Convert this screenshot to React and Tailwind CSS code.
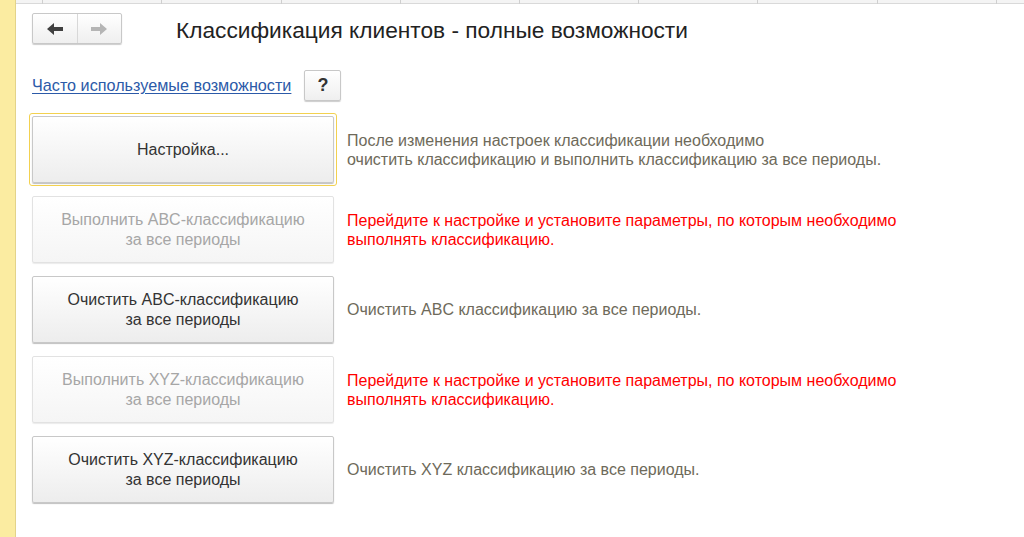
import React from 'react';

const actions = [
  {
    label: ['Настройка...'],
    note: ['После изменения настроек классификации необходимо', 'очистить классификацию и выполнить классификацию за все периоды.'],
    focused: true,
  },
  {
    label: ['Выполнить ABC-классификацию', 'за все периоды'],
    note: ['Перейдите к настройке и установите параметры, по которым необходимо', 'выполнять классификацию.'],
    disabled: true,
  },
  {
    label: ['Очистить ABC-классификацию', 'за все периоды'],
    note: ['Очистить ABC классификацию за все периоды.'],
  },
  {
    label: ['Выполнить XYZ-классификацию', 'за все периоды'],
    note: ['Перейдите к настройке и установите параметры, по которым необходимо', 'выполнять классификацию.'],
    disabled: true,
  },
  {
    label: ['Очистить XYZ-классификацию', 'за все периоды'],
    note: ['Очистить XYZ классификацию за все периоды.'],
  },
];

const tabs = [43, 162, 282, 401, 520, 639, 758, 878, 997];

const ActionRow = ({ label, note, focused, disabled }) => (
  <div className="flex items-center">
    <div className={`p-[2px] rounded-[3px] border ${focused ? 'border-[#f3d14f]' : 'border-transparent'} -m-[3px]`}>
      <button
        type="button"
        className={`w-[302px] h-[67px] rounded-[2px] border flex flex-col items-center justify-center leading-[20px] text-[16px] ${
          disabled
            ? 'border-[#e2e2e2] text-[#a6a6a6] bg-gradient-to-b from-white to-[#f5f5f5] shadow-[0_1px_1px_rgba(0,0,0,0.08)]'
            : 'border-[#c8c8c8] text-[#333] bg-gradient-to-b from-white to-[#ededed] shadow-[0_1px_1px_rgba(0,0,0,0.25)]'
        }`}
      >
        {label.map((l) => (
          <span key={l}>{l}</span>
        ))}
      </button>
    </div>
    <div className={`ml-[13px] text-[16px] leading-[19px] ${disabled ? 'text-[#f00]' : 'text-[#6e6a5a]'}`}>
      {note.map((n) => (
        <div key={n}>{n}</div>
      ))}
    </div>
  </div>
);

export default function App() {
  return (
    <div className="w-[1024px] h-[537px] bg-white flex overflow-hidden" style={{ fontFamily: '"Liberation Sans", Arial, sans-serif' }}>
      <div className="w-[16px] shrink-0 bg-[#fbeca1] border-r border-[#e3d38a]" />
      <div className="flex-1 flex flex-col">
        <div className="relative h-[4px] bg-[#f4f4f4] border-b border-[#d9d9d9]">
          {tabs.map((x) => (
            <div key={x} className="absolute top-0 h-[4px] w-px bg-[#cfcfcf]" style={{ left: x - 17 }} />
          ))}
        </div>
        <div className="pl-[16px] flex flex-col">
          <div className="flex items-center h-[31px] mt-[9px]">
            <div className="flex w-[90px] h-[31px] border border-[#c8c8c8] rounded-[2px] bg-gradient-to-b from-white to-[#efefef] shadow-[0_1px_1px_rgba(0,0,0,0.2)]">
              <div className="flex-1 flex items-center justify-center border-r border-[#d8d8d8]">
                <svg width="16" height="12" viewBox="0 0 16 12">
                  <path d="M0 6 L7 0 V4 H16 V8 H7 V12 Z" fill="#404040" />
                </svg>
              </div>
              <div className="flex-1 flex items-center justify-center">
                <svg width="16" height="12" viewBox="0 0 16 12">
                  <path d="M16 6 L9 0 V4 H0 V8 H9 V12 Z" fill="#b5b5b5" />
                </svg>
              </div>
            </div>
            <div className="ml-[54px] pt-[3px] leading-[26px] text-[22.7px] text-[#222]">Классификация клиентов - полные возможности</div>
          </div>
          <div className="flex items-center mt-[26px]">
            <a href="#" className="text-[16.2px] text-[#2c5aa8] underline underline-offset-2">Часто используемые возможности</a>
            <div className="ml-[13px] w-[37px] h-[31px] flex items-center justify-center border border-[#c8c8c8] rounded-[2px] bg-gradient-to-b from-white to-[#efefef] shadow-[0_1px_1px_rgba(0,0,0,0.2)] text-[18px] font-bold text-[#333]">
              ?
            </div>
          </div>
          <div className="flex flex-col gap-[13px] mt-[15px]">
            {actions.map((a, i) => (
              <ActionRow key={i} {...a} />
            ))}
          </div>
        </div>
      </div>
    </div>
  );
}
